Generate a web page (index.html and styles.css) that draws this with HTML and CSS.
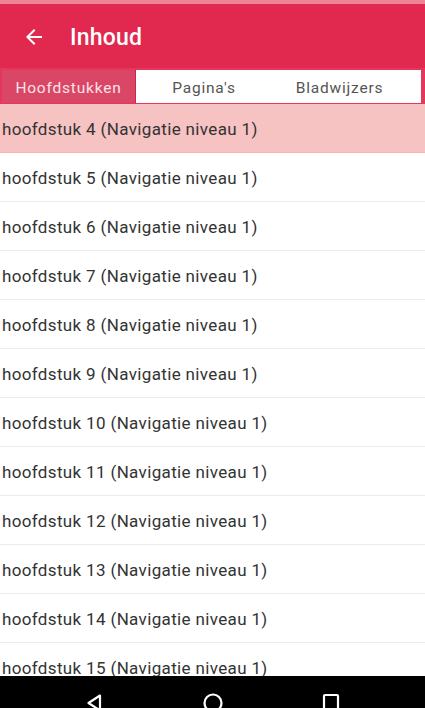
FILE: index.html
```html
<!DOCTYPE html>
<html lang="nl">
<head>
<meta charset="utf-8">
<title>Inhoud</title>
<link rel="stylesheet" href="styles.css">
</head>
<body>
<div class="screen">
  <div class="statusbar"></div>
  <header class="appbar">
    <svg class="back" width="24" height="24" viewBox="0 0 24 24"><path d="M20 11H7.83l5.59-5.59L12 4l-8 8 8 8 1.41-1.41L7.83 13H20v-2z" fill="#fff"/></svg>
    <h1 class="title">Inhoud</h1>
  </header>
  <div class="tabbar">
    <div class="tab active">Hoofdstukken</div>
    <div class="tab mid">Pagina's</div>
    <div class="tab last">Bladwijzers</div>
  </div>
  <ul class="list">
    <li class="row selected">hoofdstuk 4 (Navigatie niveau 1)</li>
    <li class="row">hoofdstuk 5 (Navigatie niveau 1)</li>
    <li class="row">hoofdstuk 6 (Navigatie niveau 1)</li>
    <li class="row">hoofdstuk 7 (Navigatie niveau 1)</li>
    <li class="row">hoofdstuk 8 (Navigatie niveau 1)</li>
    <li class="row">hoofdstuk 9 (Navigatie niveau 1)</li>
    <li class="row">hoofdstuk 10 (Navigatie niveau 1)</li>
    <li class="row">hoofdstuk 11 (Navigatie niveau 1)</li>
    <li class="row">hoofdstuk 12 (Navigatie niveau 1)</li>
    <li class="row">hoofdstuk 13 (Navigatie niveau 1)</li>
    <li class="row">hoofdstuk 14 (Navigatie niveau 1)</li>
    <li class="row">hoofdstuk 15 (Navigatie niveau 1)</li>
  </ul>
  <nav class="navbar">
    <svg class="nav-icon" width="22" height="22" viewBox="0 0 22 22"><path d="M16 3.5 L4.5 11 L16 18.5 Z" fill="none" stroke="#fff" stroke-width="2.2" stroke-linejoin="round"/></svg>
    <svg class="nav-icon" width="22" height="22" viewBox="0 0 22 22"><circle cx="11" cy="11" r="8.5" fill="none" stroke="#fff" stroke-width="2.2"/></svg>
    <svg class="nav-icon" width="22" height="22" viewBox="0 0 22 22"><rect x="4" y="3" width="14" height="16" rx="1" fill="none" stroke="#fff" stroke-width="2.2"/></svg>
  </nav>
</div>
</body>
</html>
```
FILE: styles.css
```css
* { box-sizing: border-box; }
html, body { margin: 0; padding: 0; }
body {
  width: 425px;
  height: 708px;
  overflow: hidden;
  background: #fff;
  font-family: Roboto, "Liberation Sans", sans-serif;
}
.screen {
  width: 425px;
  height: 708px;
  display: flex;
  flex-direction: column;
  overflow: hidden;
}
.statusbar {
  height: 4px;
  flex: none;
  background: #ec8495;
}
.appbar {
  height: 64px;
  flex: none;
  background: #e1294f;
  display: flex;
  align-items: center;
  padding-left: 22px;
  padding-top: 2px;
}
.back { flex: none; }
.title {
  margin: 0 0 0 24px;
  color: #fff;
  font-size: 23px;
  font-weight: 500;
  letter-spacing: 0.2px;
}
.tabbar {
  height: 36px;
  flex: none;
  display: flex;
  background: #e3385b;
  padding: 2px 4px 1px 2px;
}
.tab {
  display: flex;
  align-items: center;
  justify-content: center;
  padding-top: 2px;
  background: #fff;
  color: #555;
  font-size: 15.5px;
  letter-spacing: 0.8px;
  white-space: nowrap;
}
.tab.active {
  width: 134px;
  background: #da4766;
  color: #fbe3e8;
  border-right: 1px solid #c8294b;
}
.tab.mid { width: 136px; }
.tab.last { flex: 1; padding-right: 14px; }
.list {
  list-style: none;
  margin: 0;
  padding: 0;
  flex: 1;
  overflow: hidden;
}
.row {
  height: 49px;
  border-bottom: 1px solid #ebebeb;
  display: flex;
  align-items: center;
  padding-left: 2px;
  padding-top: 1px;
  color: #333;
  font-size: 17px;
  letter-spacing: 0.35px;
  white-space: nowrap;
}
.row.selected {
  background: #f6c2c2;
  border-bottom-color: #f2b5b5;
}
.navbar {
  height: 32px;
  flex: none;
  background: #000;
  display: flex;
  justify-content: center;
  align-items: flex-start;
  gap: 96px;
  padding-top: 16px;
}
.nav-icon { flex: none; }
```
